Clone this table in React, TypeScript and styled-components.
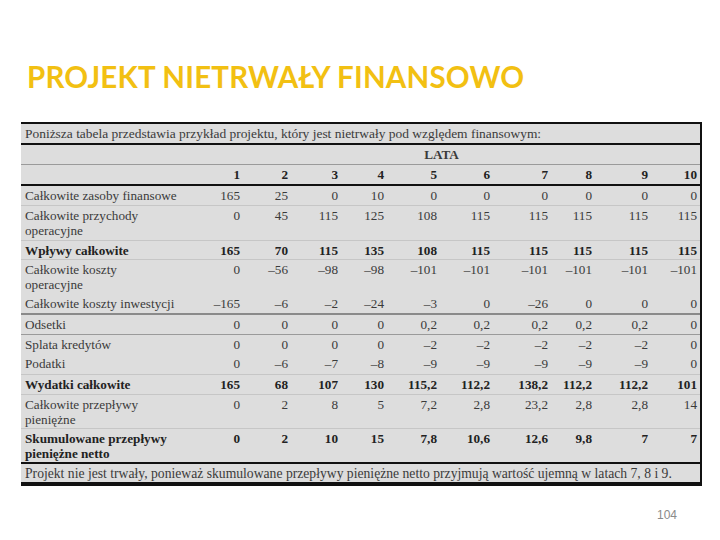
import React from "react";
import styled, { createGlobalStyle } from "styled-components";

const GlobalStyle = createGlobalStyle`
  html, body { margin: 0; padding: 0; background: #ffffff; }
  body { width: 720px; height: 540px; overflow: hidden; }
`;

const COLS = "184px 38px 48px 50px 46px 53px 53px 58px 44px 56px 49px";

const Slide = styled.div`
  width: 720px;
  height: 540px;
  box-sizing: border-box;
  padding: 60px 20px 0 21px;
  display: flex;
  flex-direction: column;
`;

const Title = styled.h1`
  margin: 0 0 28px 6px;
  font-family: Lato, "Liberation Sans", sans-serif;
  font-weight: 700;
  font-size: 29.5px;
  line-height: 34px;
  color: #f2c012;
  letter-spacing: 0.2px;
  white-space: nowrap;
`;

const Table = styled.div`
  width: 679px;
  background: #dddddd;
  border-top: 2px solid #111;
  border-right: 2px solid #111;
  box-sizing: content-box;
  font-family: "Liberation Serif", "DejaVu Serif", serif;
  font-size: 13.2px;
  color: #3a3a3a;
`;

type Line = "none" | "light" | "gray" | "dgray" | "black" | "heavy";

const lineStyle: Record<Line, string> = {
  none: "none",
  light: "1px solid #c6c6c6",
  gray: "1px solid #9a9a9a",
  dgray: "2px solid #8a8a8a",
  black: "2px solid #111",
  heavy: "4px solid #111",
};

const Row = styled.div<{ $h: number; $line: Line; $bold?: boolean }>`
  display: grid;
  grid-template-columns: ${COLS};
  height: ${(p) => p.$h}px;
  border-bottom: ${(p) => lineStyle[p.$line]};
  font-weight: ${(p) => (p.$bold ? 700 : 400)};
  color: ${(p) => (p.$bold ? "#222" : "#3a3a3a")};
  line-height: 15px;
`;

const Full = styled.div<{ $size: number }>`
  grid-column: 1 / -1;
  padding: 2px 0 0 4px;
  white-space: nowrap;
  font-size: ${(p) => p.$size}px;
`;

const Label = styled.div`
  padding: 2px 0 0 4px;
  width: 152px;
`;

const Num = styled.div`
  padding: 2px 3px 0 0;
  text-align: right;
  white-space: nowrap;
`;

const Lata = styled.div`
  grid-column: 2 / -1;
  padding: 2px 22px 0 0;
  text-align: center;
  font-weight: 700;
`;

const PageNo = styled.div`
  margin-top: 22px;
  padding-right: 23px;
  text-align: right;
  font-family: "Liberation Sans", Arial, sans-serif;
  font-size: 12px;
  line-height: 14px;
  color: #8a8a8a;
`;

type DataRow = {
  label: string;
  values: string[];
  h: number;
  line: Line;
  bold?: boolean;
};

const rows: DataRow[] = [
  { label: "Całkowite zasoby finansowe", values: ["165", "25", "0", "10", "0", "0", "0", "0", "0", "0"], h: 19, line: "light" },
  { label: "Całkowite przychody operacyjne", values: ["0", "45", "115", "125", "108", "115", "115", "115", "115", "115"], h: 34, line: "light" },
  { label: "Wpływy całkowite", values: ["165", "70", "115", "135", "108", "115", "115", "115", "115", "115"], h: 18, line: "light", bold: true },
  { label: "Całkowite koszty operacyjne", values: ["0", "–56", "–98", "–98", "–101", "–101", "–101", "–101", "–101", "–101"], h: 34, line: "none" },
  { label: "Całkowite koszty inwestycji", values: ["–165", "–6", "–2", "–24", "–3", "0", "–26", "0", "0", "0"], h: 19, line: "dgray" },
  { label: "Odsetki", values: ["0", "0", "0", "0", "0,2", "0,2", "0,2", "0,2", "0,2", "0"], h: 19, line: "gray" },
  { label: "Splata kredytów", values: ["0", "0", "0", "0", "–2", "–2", "–2", "–2", "–2", "0"], h: 19, line: "none" },
  { label: "Podatki", values: ["0", "–6", "–7", "–8", "–9", "–9", "–9", "–9", "–9", "0"], h: 20, line: "light" },
  { label: "Wydatki całkowite", values: ["165", "68", "107", "130", "115,2", "112,2", "138,2", "112,2", "112,2", "101"], h: 19, line: "light", bold: true },
  { label: "Całkowite przepływy pieniężne", values: ["0", "2", "8", "5", "7,2", "2,8", "23,2", "2,8", "2,8", "14"], h: 33, line: "light" },
  { label: "Skumulowane przepływy pieniężne netto", values: ["0", "2", "10", "15", "7,8", "10,6", "12,6", "9,8", "7", "7"], h: 33, line: "black", bold: true },
];

const years = ["1", "2", "3", "4", "5", "6", "7", "8", "9", "10"];

export default function App() {
  return (
    <>
      <GlobalStyle />
      <Slide>
        <Title>PROJEKT NIETRWAŁY FINANSOWO</Title>
        <Table>
          <Row $h={19} $line="black">
            <Full $size={13.45}>
              Poniższa tabela przedstawia przykład projektu, który jest nietrwały pod względem finansowym:
            </Full>
          </Row>
          <Row $h={19} $line="gray">
            <div />
            <Lata>LATA</Lata>
          </Row>
          <Row $h={19} $line="black" $bold>
            <div />
            {years.map((y) => (
              <Num key={y}>{y}</Num>
            ))}
          </Row>
          {rows.map((r) => (
            <Row key={r.label} $h={r.h} $line={r.line} $bold={r.bold}>
              <Label>{r.label}</Label>
              {r.values.map((v, i) => (
                <Num key={i}>{v}</Num>
              ))}
            </Row>
          ))}
          <Row $h={18} $line="heavy">
            <Full $size={13.65}>
              Projekt nie jest trwały, ponieważ skumulowane przepływy pieniężne netto przyjmują wartość ujemną w latach 7, 8 i 9.
            </Full>
          </Row>
        </Table>
        <PageNo>104</PageNo>
      </Slide>
    </>
  );
}
